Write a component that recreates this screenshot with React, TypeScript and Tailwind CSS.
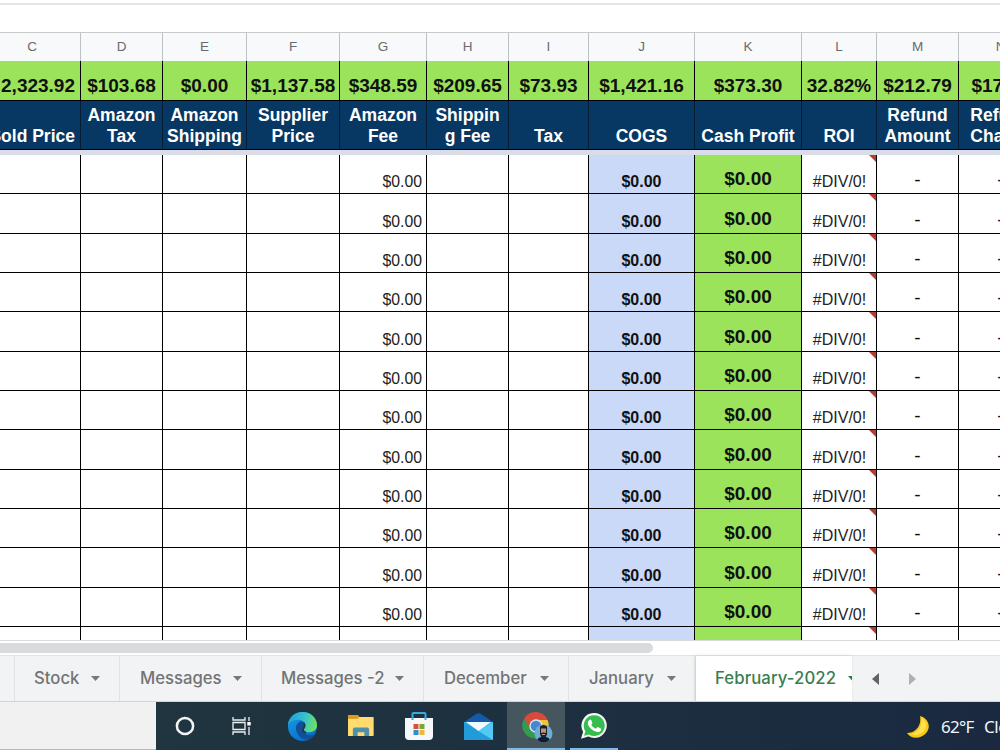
import React from "react";

type Column = { letter: string; total: string; label: string[]; width: string; fill?: string };

const columns: Column[] = [
  { letter: "C", total: "2,323.92", label: ["Sold Price"], width: "w-[81px]" },
  { letter: "D", total: "$103.68", label: ["Amazon", "Tax"], width: "w-[82px]" },
  { letter: "E", total: "$0.00", label: ["Amazon", "Shipping"], width: "w-[84px]" },
  { letter: "F", total: "$1,137.58", label: ["Supplier", "Price"], width: "w-[93px]" },
  { letter: "G", total: "$348.59", label: ["Amazon", "Fee"], width: "w-[87px]" },
  { letter: "H", total: "$209.65", label: ["Shippin", "g Fee"], width: "w-[82px]" },
  { letter: "I", total: "$73.93", label: ["Tax"], width: "w-[80px]" },
  { letter: "J", total: "$1,421.16", label: ["COGS"], width: "w-[106px]", fill: "bg-[#c9d9f7]" },
  { letter: "K", total: "$373.30", label: ["Cash Profit"], width: "w-[107px]", fill: "bg-[#9be35a]" },
  { letter: "L", total: "32.82%", label: ["ROI"], width: "w-[75px]" },
  { letter: "M", total: "$212.79", label: ["Refund", "Amount"], width: "w-[82px]" },
  { letter: "N", total: "$17.37", label: ["Refund", "Charge"], width: "w-[84px]" },
];

const sheets = [
  { name: "Stock", width: "w-[105px]", pad: "pl-[19px]", text: "w-[45px]" },
  { name: "Messages", width: "w-[142px]", pad: "pl-5", text: "w-[81px]" },
  { name: "Messages -2", width: "w-[162px]", pad: "pl-[19px]", text: "w-[102px]" },
  { name: "December", width: "w-[145px]", pad: "pl-5", text: "w-[84px]" },
  { name: "January", width: "w-[127px]", pad: "pl-5", text: "w-[66px]" },
];

function CellContent({ letter }: { letter: string }) {
  switch (letter) {
    case "G":
      return <span className="ml-auto pr-[4px] pb-[2px] text-[15.8px] leading-[18px] text-[#222]">$0.00</span>;
    case "J":
      return <span className="mx-auto pb-[2px] text-[16px] leading-[18px] font-bold">$0.00</span>;
    case "K":
      return <span className="mx-auto pb-1 text-[19px] leading-[21px] font-bold">$0.00</span>;
    case "L":
      return (
        <>
          <span className="mx-auto pb-[2px] pl-px text-[16px] leading-[18px] text-[#222]">#DIV/0!</span>
          <svg className="absolute top-0 right-0 h-[7px] w-[7px]" viewBox="0 0 7 7"><path d="M0 0h7v7z" fill="#b83a30" /></svg>
        </>
      );
    case "M":
    case "N":
      return <span className="mx-auto pb-[3px] text-[19px] leading-[20px]">-</span>;
    default:
      return null;
  }
}

function Caret() {
  return <svg className="ml-3 h-[5px] w-[9px] shrink-0" viewBox="0 0 9 5"><path d="M0 0h9L4.500 5z" fill="#76797c" /></svg>;
}

function Taskbar() {
  return (
    <div className="flex h-[48px] w-[1000px]">
      <div className="w-[156px] shrink-0 border-b border-[#b8b8b8] bg-[#f1f1f1]" />
      <div className="flex flex-1 items-stretch overflow-hidden bg-linear-to-r from-[#20353f] to-[#1a2940]">
        <div className="flex w-[57px] items-center justify-center">
          <svg className="h-5 w-5" viewBox="0 0 20 20"><circle cx="10" cy="10" r="8.100" fill="none" stroke="#f0f4f6" strokeWidth="2.500" /></svg>
        </div>
        <div className="flex w-[58px] items-center justify-center">
          <svg className="h-5 w-5" viewBox="0 0 20 20" fill="none" stroke="#edf1f3" strokeWidth="1.300">
            <path d="M1 1v3h12V1M1 19v-3h12v3M1 6.500h12v7H1zM17 1v4M17 11v8" />
            <path d="M15.300 6h3.400v3.500h-3.400z" fill="#fff" stroke="none" />
          </svg>
        </div>
        <div className="flex w-[62px] items-center justify-center">
          <svg className="h-[31px] w-[31px]" viewBox="0 0 32 32">
            <defs>
              <linearGradient id="edge-top" x1="2" y1="8" x2="31" y2="17" gradientUnits="userSpaceOnUse"><stop stopColor="#239edc" /><stop offset=".5" stopColor="#36c3ce" /><stop offset="1" stopColor="#75e450" /></linearGradient>
              <linearGradient id="edge-low" x1="2" y1="9" x2="17" y2="29" gradientUnits="userSpaceOnUse"><stop stopColor="#1893df" /><stop offset="1" stopColor="#0870cb" /></linearGradient>
            </defs>
            <circle cx="16" cy="16" r="15" fill="url(#edge-low)" />
            <path d="M1 15C1 6.500 8 1 16 1c9 0 15 6.500 15 13.500 0 5-4 7.500-8.500 7.500-4 0-5.500-1.500-5.500-2.500s2-1.500 2-4.500c0-3.500-3-6-7.500-6C6 9 2 12 1 15z" fill="url(#edge-top)" />
            <path d="M15.500 10.500C10 11.500 8 16 10 21.500 12 27 17 30 22 29.500c3-1 5.500-3 7-5.500-5 2.500-12 .500-13-4-.500-2 1-3 1-5.500 0-1.500-.5-3-1.500-4z" fill="#124f97" />
            <path d="M16.800 12c2.600 2.500.9 4.900-.1 6.400-.8 1.600.4 3.300 3 4" fill="none" stroke="#203744" strokeWidth="2" />
          </svg>
        </div>
        <div className="flex w-[55px] items-center justify-center pl-px">
          <svg className="h-[23px] w-[26px]" viewBox="0 0 27 24">
            <path d="M0 1q0-1 1-1h9l2 2h13.500q1 0 1 1v18H0z" fill="#e9b848" />
            <path d="M0 4h10l2-2h14.500v20H0z" fill="#ffdb70" />
            <path d="M0 4V1q0-1 1-1h9l1.500 2L10 4z" fill="#d89a20" />
            <path d="M5 22v-7q0-2 2-2h13q2 0 2 2v7h-5v-4h-7v4z" fill="#4f8fab" />
          </svg>
        </div>
        <div className="flex w-[61px] items-center justify-center">
          <svg className="h-[29px] w-7" viewBox="0 0 28 29">
            <path d="M7.500 8V2q0-1 1-1h11q1 0 1 1v6" fill="none" stroke="#3aa8e1" strokeWidth="2" />
            <path d="M0 6h28v18q0 4-4 4H4q-4 0-4-4z" fill="#f5f7f9" />
            <path d="M7.500 6v2M20.500 6v2" stroke="#3aa8e1" strokeWidth="2" />
            <path d="M8.500 12h5v5h-5z" fill="#d55335" /><path d="M14.500 12h5v5h-5z" fill="#7aa638" />
            <path d="M8.500 18h5v5h-5z" fill="#308ec2" /><path d="M14.500 18h5v5h-5z" fill="#eeb43b" />
          </svg>
        </div>
        <div className="flex w-[58px] items-center justify-center">
          <svg className="h-[27px] w-[29px]" viewBox="0 0 29 27">
            <path d="M0 9L12.500.800q2-1.200 4 0L29 9v4H0z" fill="#125aaa" />
            <path d="M0 9h29v18H0z" fill="#35b2ea" />
            <path d="M0 9l29 18H0z" fill="#239bd9" />
            <path d="M29 9v18L14.500 18z" fill="#52c9f2" />
            <path d="M2 9h25L14.500 18z" fill="#f3faff" />
          </svg>
        </div>
        <div className="flex w-[58px] items-center justify-center border-b-2 border-[#83b9e7] bg-[#46565f]">
          <svg className="mt-1 ml-[3px] h-[31px] w-[31px]" viewBox="0 0 31 31">
            <defs><clipPath id="avatar"><circle cx="21.500" cy="21.500" r="9" /></clipPath></defs>
            <path d="M2 7A13 13 0 0 1 25.500 8H14L8 17z" fill="#d94a3d" />
            <path d="M2 7a13 13 0 0 0 11.500 19.500L17 20 8 15z" fill="#329b50" />
            <path d="M13 8h12.500A13 13 0 0 1 13.500 26.500L20 14z" fill="#f3c536" />
            <circle cx="14" cy="14" r="6.700" fill="#d8e7f4" /><circle cx="14" cy="14" r="5.300" fill="#4a85d4" />
            <g clipPath="url(#avatar)">
              <path d="M12 12h19v19H12z" fill="#6eacd7" />
              <path d="M14.500 31q.5-6 5-6h4q4.500 0 5 6z" fill="#111c30" />
              <path d="M18 14.500q3.500-3 7 0v7q-1 5-3.500 5T18 21.500z" fill="#1d2024" />
              <path d="M19 16.500h5v4.500q-2.500-1.200-5 0z" fill="#bd9280" /><path d="M20 22.500h3" stroke="#c7a496" />
            </g>
          </svg>
        </div>
        <div className="ml-[5px] flex w-[48px] items-center justify-center border-b-2 border-[#83b9e7]">
          <svg className="mt-[2px] h-[26px] w-[26px]" viewBox="0 0 27 27">
            <path d="M13.700 0a13 13 0 1 1-6 24.500L0 26.700l2.200-7.200A13 13 0 0 1 13.700 0z" fill="#f3f8f4" />
            <path d="M13.700 2.300a10.800 10.800 0 1 1-5.700 19.900l-4.800 1.400 1.400-4.700A10.800 10.800 0 0 1 13.700 2.300z" fill="#35bd50" />
            <path d="M8.600 7.200q1-.9 2 .1l1.200 2.800q.2.700-1.100 2 1.500 3 4.700 4.300l1.500-1.600q.4-.4 1 0l2.700 1.300q.7.400.2 1.700-1.500 2.700-4.800 1.700-6-1.600-8.600-7.100-1-3.300 1.200-5.200z" fill="#fff" />
          </svg>
        </div>
        <div className="ml-auto flex items-center whitespace-nowrap pt-0.5">
          <svg className="mt-[-1px] mr-[12px] h-[22px] w-[22px]" viewBox="0 0 22 22"><path d="M13 0c8 2 11 10 7 16-5 7-16 8-20 1 8 0 15-7 13-17z" fill="#f8c719" /><path d="M14 1c5 3 7 9 3 14-4 4-9 5-14 3 8 0 13-8 11-17z" fill="#ffe14b" /></svg>
          <span className="w-[43px] font-[Noto_Sans,sans-serif] text-[17px] tracking-[-0.7px] text-[#f1f5f7]">62°F</span>
          <span className="w-[16px] overflow-hidden font-[Noto_Sans,sans-serif] text-[17px] tracking-[-0.5px] text-[#f1f5f7]">Cloudy</span>
        </div>
      </div>
    </div>
  );
}

export default function App() {
  return (
    <main className="flex h-[750px] w-[1000px] flex-col overflow-hidden bg-white font-[Liberation_Sans,sans-serif] text-[#111]">
      <div className="h-[33px] shrink-0 border-b border-[#c8caca] pt-[3px]"><div className="h-[2px] bg-[#e5e5e5]" /></div>
      <div className="h-[608px] w-[1000px] shrink-0 overflow-hidden border-b border-[#d9dadd]">
        <div className="flex h-[28px] w-[1043px] bg-[#f8f9fa]">
          {columns.map((c) => <div key={c.letter} className={`${c.width} flex shrink-0 items-center justify-center border-r border-[#bfc1c1] text-[13.500px] text-[#686b6e] ${c.letter === "C" ? "pr-[16px]" : ""}`}>{c.letter}</div>)}
        </div>
        <div className="flex h-[40px] w-[1043px] border-b border-black bg-[#9be35a]">
          {columns.map((c) => <div key={c.letter} className={`${c.width} flex shrink-0 items-end border-r border-black pb-1 text-[19px] leading-[21px] font-bold whitespace-nowrap ${c.letter === "C" ? "justify-end pr-[5px]" : "justify-center"}`}>{c.total}</div>)}
        </div>
        <div className="flex h-[49px] w-[1043px] border-b border-black bg-[#073763]">
          {columns.map((c) => (
            <div key={c.letter} className={`${c.width} flex shrink-0 flex-col justify-end border-r border-[#051d34] pb-[2px] text-[17.500px] leading-[21px] font-bold whitespace-nowrap text-white ${c.letter === "C" ? "items-end pr-[5px]" : "items-center"}`}>
              {c.label.map((l) => <span key={l}>{l}</span>)}
            </div>
          ))}
        </div>
        <div className="h-[5px] bg-[#dadde8]" />
        {Array.from({ length: 13 }, (_, r) => (
          <div key={r} className="flex h-[39.35px] w-[1043px]">
            {columns.map((c) => (
              <div key={c.letter} className={`${c.width} relative flex shrink-0 items-end border-r border-b border-black ${c.fill ?? "bg-white"}`}><CellContent letter={c.letter} /></div>
            ))}
          </div>
        ))}
      </div>
      <div className="h-[14px] shrink-0 bg-white pt-[2px]"><div className="h-[10px] w-[653px] rounded-r-full bg-[#d9dbdd]" /></div>
      <div className="flex h-[47px] shrink-0 border-t border-b border-t-[#e2e3e5] border-b-[#d2d4d6] bg-[#f1f3f4] font-[Inter,sans-serif] text-[16.7px] font-medium text-[#727476]">
        <div className="w-[15px] border-r border-[#dfe1e3]" />
        {sheets.map((s) => (
          <div key={s.name} className={`${s.width} ${s.pad} flex shrink-0 items-center border-r border-[#e0e2e4] whitespace-nowrap`}>
            <span className={s.text}>{s.name}</span><Caret />
          </div>
        ))}
        <div className="flex w-[156px] shrink-0 items-center overflow-hidden bg-white pl-[19px] text-[#3a7d50] shadow-[-1px_0_3px_#ccc]">
          <span className="w-[122px] shrink-0 whitespace-nowrap tracking-[0.1px]">February-2022</span>
          <svg className="ml-[11px] h-[5px] w-[9px] shrink-0" viewBox="0 0 9 5"><path d="M0 0h9L4.500 5z" fill="#2b7945" /></svg>
        </div>
        <div className="flex items-center pl-5">
          <svg className="h-3 w-[7px]" viewBox="0 0 7 12"><path d="M7 0v12L0 6z" fill="#606265" /></svg>
          <svg className="ml-[30px] h-3 w-[7px]" viewBox="0 0 7 12"><path d="M0 0v12l7-6z" fill="#aeb0b2" /></svg>
        </div>
      </div>
      <Taskbar />
    </main>
  );
}
